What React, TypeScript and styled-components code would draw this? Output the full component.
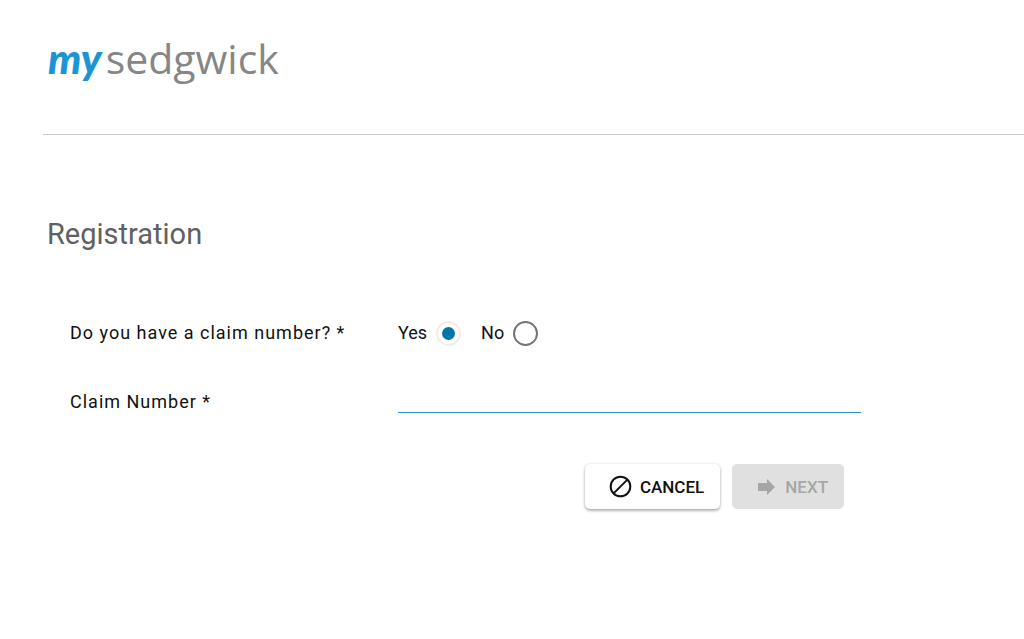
import React, { useState } from "react";
import styled, { createGlobalStyle } from "styled-components";

const GlobalStyle = createGlobalStyle`
  *, *::before, *::after { box-sizing: border-box; }
  body {
    margin: 0;
    background: #fff;
    color: #111;
    font-family: Roboto, "Liberation Sans", sans-serif;
    font-size: 18px;
    line-height: 24px;
  }
`;

const Page = styled.div`
  min-height: 100vh;
  padding-left: 43px;
`;

const Header = styled.header`
  display: flex;
  align-items: flex-start;
  height: 135px;
  padding: 30px 5px 0;
  border-bottom: 1px solid #ccc;
`;

const Logo = styled.a`
  display: flex;
  align-items: baseline;
  gap: 4px;
  color: #868686;
  font-family: "Open Sans", "Noto Sans", sans-serif;
  font-size: 41px;
  line-height: 56px;
  text-decoration: none;
`;

const LogoAccent = styled.span`
  color: #1b95d4;
  font-family: Lato, "Open Sans", sans-serif;
  font-size: 42px;
  font-style: italic;
  font-weight: 900;
`;

const Main = styled.main`
  padding: 79px 4px 0;
`;

const Title = styled.h1`
  margin: 0;
  color: #5f6062;
  font-size: 29px;
  font-weight: 400;
  line-height: 40px;
`;

const Form = styled.form`
  display: flex;
  flex-direction: column;
  max-width: 814px;
  padding: 63px 0 32px;
`;

const Row = styled.div`
  display: grid;
  grid-template-columns: 328px 1fr;
  align-items: center;
  min-height: 32px;
  margin-bottom: 37px;
  padding-left: 23px;
`;

const FieldLabel = styled.label`
  letter-spacing: 1px;
`;

const Options = styled.div`
  display: flex;
  align-items: center;
  gap: 20px;
`;

const Option = styled.label`
  display: flex;
  align-items: center;
  gap: 9px;
`;

const Radio = styled.input`
  appearance: none;
  display: grid;
  place-items: center;
  width: 25px;
  height: 25px;
  margin: 0;
  border: 2px solid #757575;
  border-radius: 50%;
  background: #fff;

  &:checked { border-color: #eee; }

  &:checked::before {
    content: "";
    width: 13px;
    height: 13px;
    border-radius: 50%;
    background: #0076a8;
  }
`;

const TextInput = styled.input`
  width: 100%;
  height: 22px;
  padding: 0;
  border: 0;
  border-bottom: 1px solid #2a8fc4;
  outline: none;
  background: transparent;
  font: inherit;
  line-height: 20px;
`;

const Actions = styled.div`
  display: flex;
  justify-content: flex-end;
  gap: 12px;
  padding: 9px 17px 0 0;
`;

const Button = styled.button`
  display: flex;
  align-items: center;
  gap: 8px;
  height: 45px;
  padding: 0 16px 0 24px;
  border: 0;
  border-radius: 5px;
  background: #fff;
  box-shadow: 0 2px 3px rgba(0, 0, 0, 0.28), 0 0 3px rgba(0, 0, 0, 0.14);
  color: #111;
  font: inherit;
  font-size: 17px;
  font-weight: 500;

  &:disabled {
    background: #e0e0e0;
    box-shadow: none;
    color: #a6a6a6;
  }
`;

export default function App() {
  const [hasClaim, setHasClaim] = useState(true);
  const [claim, setClaim] = useState("");

  return (
    <>
      <GlobalStyle />
      <Page>
        <Header>
          <Logo href="#">
            <LogoAccent>my</LogoAccent>
            <span>sedgwick</span>
          </Logo>
        </Header>
        <Main>
          <Title>Registration</Title>
          <Form>
            <Row role="radiogroup" aria-labelledby="has-claim">
              <FieldLabel as="span" id="has-claim">Do you have a claim number? *</FieldLabel>
              <Options>
                <Option>
                  Yes
                  <Radio type="radio" name="hasClaim" checked={hasClaim} onChange={() => setHasClaim(true)} />
                </Option>
                <Option>
                  No
                  <Radio type="radio" name="hasClaim" checked={!hasClaim} onChange={() => setHasClaim(false)} />
                </Option>
              </Options>
            </Row>
            <Row>
              <FieldLabel htmlFor="claim">Claim Number *</FieldLabel>
              <TextInput id="claim" value={claim} onChange={(e) => setClaim(e.target.value)} />
            </Row>
            <Actions>
              <Button type="button">
                <svg width="23" height="23" viewBox="0 0 23 23" fill="none" stroke="currentColor" strokeWidth="2" aria-hidden="true">
                  <circle cx="11.5" cy="11.5" r="9.8" />
                  <path d="M18.4 4.6 4.6 18.4" />
                </svg>
                CANCEL
              </Button>
              <Button type="submit" disabled={!claim}>
                <svg width="21" height="18" viewBox="0 0 21 18" fill="currentColor" aria-hidden="true">
                  <path d="M2 5h9V1l8 8-8 8v-4H2z" />
                </svg>
                NEXT
              </Button>
            </Actions>
          </Form>
        </Main>
      </Page>
    </>
  );
}
